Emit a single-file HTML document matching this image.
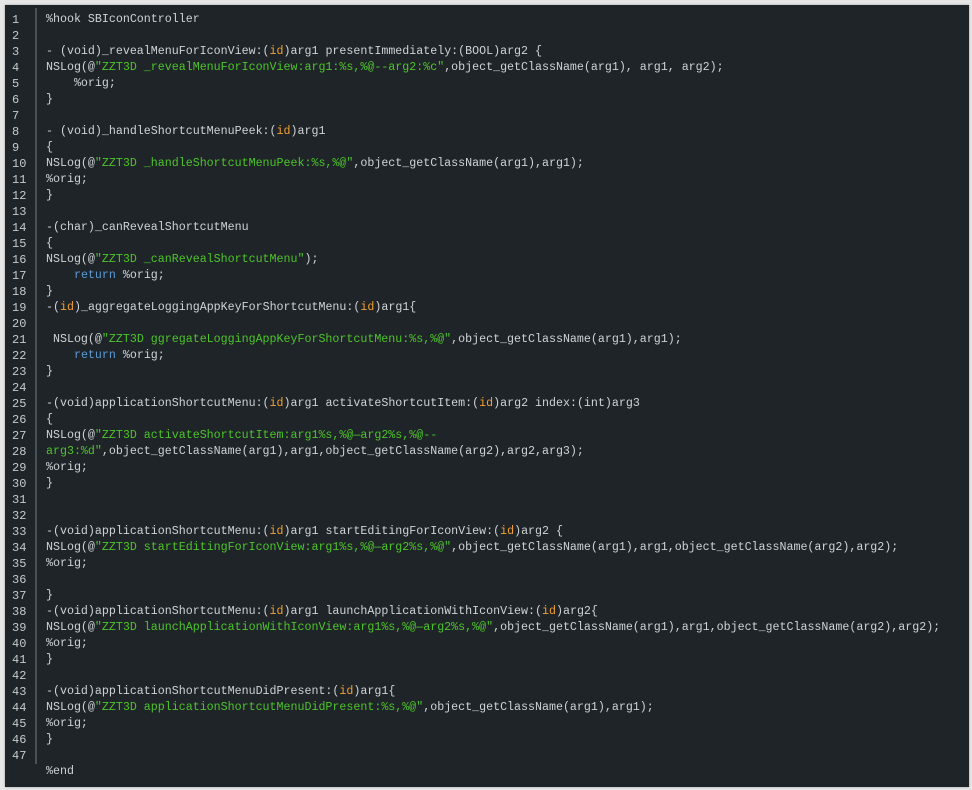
<!DOCTYPE html>
<html><head><meta charset="utf-8"><style>
html,body{margin:0;padding:0;background:#e6e6e6;width:972px;height:790px;overflow:hidden}
#box{position:absolute;left:5px;top:5px;width:964px;height:782px;background:#1e2428;box-shadow:0 0 2px #999}
#g{position:absolute;left:35px;top:8px;width:2px;height:756px;background:#4a5257}
pre{margin:0;position:absolute;top:12px;font-family:"Liberation Mono",monospace;font-size:11.65px;line-height:16px;color:#cfd3d6}
#n{left:12px;color:#c6cacc;font-size:12px}
#c{left:46px}
.k{color:#f0a030}.s{color:#4ec42a}.r{color:#5b9bd6}
</style></head><body>
<div id="box"></div><div id="g"></div>
<pre id="n">1
2
3
4
5
6
7
8
9
10
11
12
13
14
15
16
17
18
19
20
21
22
23
24
25
26
27
28
29
30
31
32
33
34
35
36
37
38
39
40
41
42
43
44
45
46
47</pre>
<pre id="c">%hook SBIconController

- (void)_revealMenuForIconView:(<span class="k">id</span>)arg1 presentImmediately:(BOOL)arg2 {
NSLog(@<span class="s">"ZZT3D _revealMenuForIconView:arg1:%s,%@--arg2:%c"</span>,object_getClassName(arg1), arg1, arg2);
    %orig;
}

- (void)_handleShortcutMenuPeek:(<span class="k">id</span>)arg1
{
NSLog(@<span class="s">"ZZT3D _handleShortcutMenuPeek:%s,%@"</span>,object_getClassName(arg1),arg1);
%orig;
}

-(char)_canRevealShortcutMenu
{
NSLog(@<span class="s">"ZZT3D _canRevealShortcutMenu"</span>);
    <span class="r">return</span> %orig;
}
-(<span class="k">id</span>)_aggregateLoggingAppKeyForShortcutMenu:(<span class="k">id</span>)arg1{

 NSLog(@<span class="s">"ZZT3D ggregateLoggingAppKeyForShortcutMenu:%s,%@"</span>,object_getClassName(arg1),arg1);
    <span class="r">return</span> %orig;
}

-(void)applicationShortcutMenu:(<span class="k">id</span>)arg1 activateShortcutItem:(<span class="k">id</span>)arg2 index:(int)arg3
{
NSLog(@<span class="s">"ZZT3D activateShortcutItem:arg1%s,%@—arg2%s,%@--</span>
<span class="s">arg3:%d"</span>,object_getClassName(arg1),arg1,object_getClassName(arg2),arg2,arg3);
%orig;
}


-(void)applicationShortcutMenu:(<span class="k">id</span>)arg1 startEditingForIconView:(<span class="k">id</span>)arg2 {
NSLog(@<span class="s">"ZZT3D startEditingForIconView:arg1%s,%@—arg2%s,%@"</span>,object_getClassName(arg1),arg1,object_getClassName(arg2),arg2);
%orig;

}
-(void)applicationShortcutMenu:(<span class="k">id</span>)arg1 launchApplicationWithIconView:(<span class="k">id</span>)arg2{
NSLog(@<span class="s">"ZZT3D launchApplicationWithIconView:arg1%s,%@—arg2%s,%@"</span>,object_getClassName(arg1),arg1,object_getClassName(arg2),arg2);
%orig;
}

-(void)applicationShortcutMenuDidPresent:(<span class="k">id</span>)arg1{
NSLog(@<span class="s">"ZZT3D applicationShortcutMenuDidPresent:%s,%@"</span>,object_getClassName(arg1),arg1);
%orig;
}

%end</pre>
</body></html>
